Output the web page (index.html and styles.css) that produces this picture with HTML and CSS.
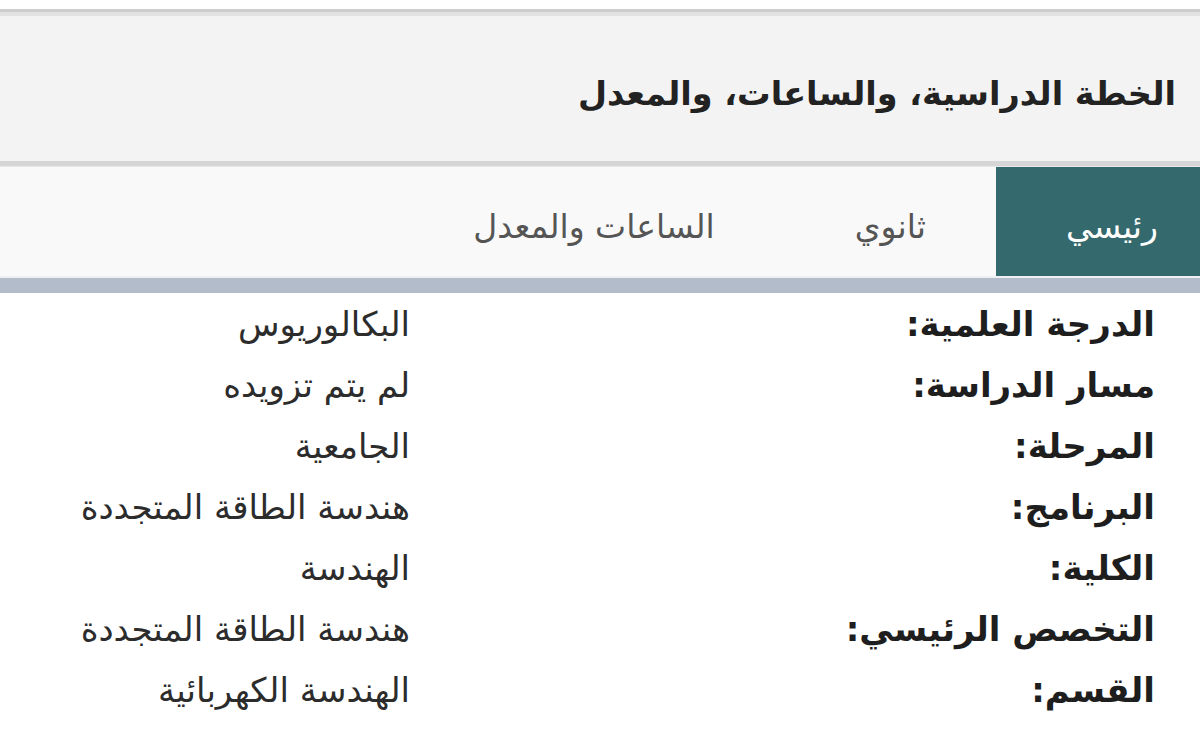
FILE: index.html
```html
<!DOCTYPE html>
<html lang="ar" dir="rtl">
<head>
    <meta charset="UTF-8">
    <meta name="viewport" content="width=device-width, initial-scale=1.0">
    <title>الخطة الدراسية، والساعات، والمعدل</title>
    <link rel="stylesheet" href="styles.css">
</head>
<body>
    <div class="page">
        <div class="header">
            <h1>الخطة الدراسية، والساعات، والمعدل</h1>
        </div>

        <div class="tabs">
            <div class="tab-list">
                <div class="tab active">رئيسي</div>
                <div class="tab">ثانوي</div>
                <div class="tab">الساعات والمعدل</div>
            </div>
        </div>
        <div class="tab-bar"></div>

        <!-- main plan details -->
        <div class="details">
            <div class="row">
                <div class="label">الدرجة العلمية:</div>
                <div class="value">البكالوريوس</div>
            </div>
            <div class="row">
                <div class="label">مسار الدراسة:</div>
                <div class="value">لم يتم تزويده</div>
            </div>
            <div class="row">
                <div class="label">المرحلة:</div>
                <div class="value">الجامعية</div>
            </div>
            <div class="row">
                <div class="label">البرنامج:</div>
                <div class="value">هندسة الطاقة المتجددة</div>
            </div>
            <div class="row">
                <div class="label">الكلية:</div>
                <div class="value">الهندسة</div>
            </div>
            <div class="row">
                <div class="label">التخصص الرئيسي:</div>
                <div class="value">هندسة الطاقة المتجددة</div>
            </div>
            <div class="row">
                <div class="label">القسم:</div>
                <div class="value">الهندسة الكهربائية</div>
            </div>
        </div>
    </div>
</body>
</html>
```

FILE: styles.css
```css
body {
    margin: 0;
    font-family: "DejaVu Sans", "Noto Sans Arabic", sans-serif;
    background-color: #fff;
    color: #222;
}
.page {
    padding-top: 9px;
    overflow: hidden;
}
.header {
    border-top: 3px solid #cdcdcd;
    border-bottom: 5px solid #d6d6d6;
    background-color: #f3f3f3;
    box-shadow: inset 0 4px 0 #e2e2e2;
    box-sizing: border-box;
    height: 157px;
    display: flex;
    align-items: center;
    padding: 14px 24px 0 0;
}
h1 {
    margin: 0;
    font-size: 33.5px;
    font-weight: bold;
    color: #222;
}
.tabs {
    background-color: #f9f9f9;
    border-top: 1px solid #e8e8e8;
    height: 109px;
}
.tab-list {
    display: flex;
    height: 100%;
    margin-right: -28px;
}
.tab {
    display: flex;
    align-items: center;
    padding: 10px 70px 0;
    font-size: 33px;
    color: #555;
}
.tab.active {
    background-color: #346a6e;
    color: #fff;
}
.tab-bar {
    height: 15px;
    background-color: #b3bccb;
    border-top: 2px solid #eef0f2;
}
.details {
    padding: 0 45px 0 0;
}
.row {
    display: flex;
    height: 61px;
    align-items: center;
}
.label {
    width: 745px;
    font-size: 34px;
    font-weight: bold;
    color: #1e1e1e;
}
.value {
    font-size: 34px;
    color: #2c2c2c;
}
```
